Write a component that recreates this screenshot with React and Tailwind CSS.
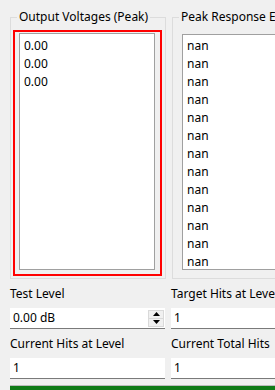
import React from "react";

const font = { fontFamily: '"Noto Sans", "Open Sans", sans-serif' };

function SpinArrows() {
  return (
    <div className="flex flex-col w-[16px] h-[17px] mr-[1px] border border-[#d9d9d9] bg-[#f0f0f0]">
      <div className="flex-1 flex items-center justify-center border-b border-[#d9d9d9]">
        <svg width="7" height="4" viewBox="0 0 7 4"><path d="M0 4 L3.5 0 L7 4 Z" fill="#000" /></svg>
      </div>
      <div className="flex-1 flex items-center justify-center">
        <svg width="7" height="4" viewBox="0 0 7 4"><path d="M0 0 L3.5 4 L7 0 Z" fill="#000" /></svg>
      </div>
    </div>
  );
}

function Field({ label, value, spin }) {
  return (
    <div className="flex flex-col">
      <div className="h-[16px] leading-[16px] text-black whitespace-nowrap">{label}</div>
      <div className="mt-[6px] h-[21px] bg-white border-b border-[#7a7a7a] flex items-center pl-[3px]">
        <span className="flex-1 text-black whitespace-nowrap">{value}</span>
        {spin && <SpinArrows />}
      </div>
    </div>
  );
}

export default function App() {
  const volts = ["0.00", "0.00", "0.00"];
  const nans = Array.from({ length: 14 }, () => "nan");
  return (
    <div className="w-[275px] h-[390px] overflow-hidden bg-[#f0f0f0] text-[12px] text-black" style={font}>
      <div className="flex gap-[6px] pl-[10px] pt-[9px] w-[500px]">
        <fieldset className="w-[156px] h-[270px] border border-[#dcdcdc] flex flex-col shrink-0">
          <legend className="ml-[6px] px-[2px] leading-[16px] whitespace-nowrap">Output Voltages (Peak)</legend>
          <div className="mt-[5px] ml-[2px] w-[149px] h-[246px] border-2 border-[#ff0000] pl-[4px] pr-[5px] pt-[1px] pb-[4px]">
            <div className="h-full bg-white border border-[#a0a0a0] pt-[3px] pl-[4px]">
              {volts.map((v, i) => (
                <div key={i} className="h-[18px] leading-[18px]">{v}</div>
              ))}
            </div>
          </div>
        </fieldset>
        <fieldset className="w-[156px] h-[270px] border border-[#dcdcdc] flex flex-col shrink-0">
          <legend className="ml-[6px] px-[2px] leading-[16px] whitespace-nowrap">Peak Response Envelope</legend>
          <div className="mt-[9px] ml-[9px] w-[137px] h-[236px] bg-white border border-[#a0a0a0] pt-[2px] pl-[4px] overflow-hidden">
            {nans.map((v, i) => (
              <div key={i} className="h-[18px] leading-[18px]">{v}</div>
            ))}
          </div>
        </fieldset>
      </div>
      <div className="grid grid-cols-[155px_155px] gap-x-[6px] gap-y-[7px] pl-[10px] pt-[7px] w-[500px]">
        <Field label="Test Level" value="0.00 dB" spin />
        <Field label="Target Hits at Level" value="1" />
        <Field label="Current Hits at Level" value="1" />
        <Field label="Current Total Hits" value="1" />
      </div>
      <div className="ml-[10px] mt-[6px] w-[400px] h-[20px] border-t border-[#bcbcbc] bg-[#0f7b16]"></div>
    </div>
  );
}
